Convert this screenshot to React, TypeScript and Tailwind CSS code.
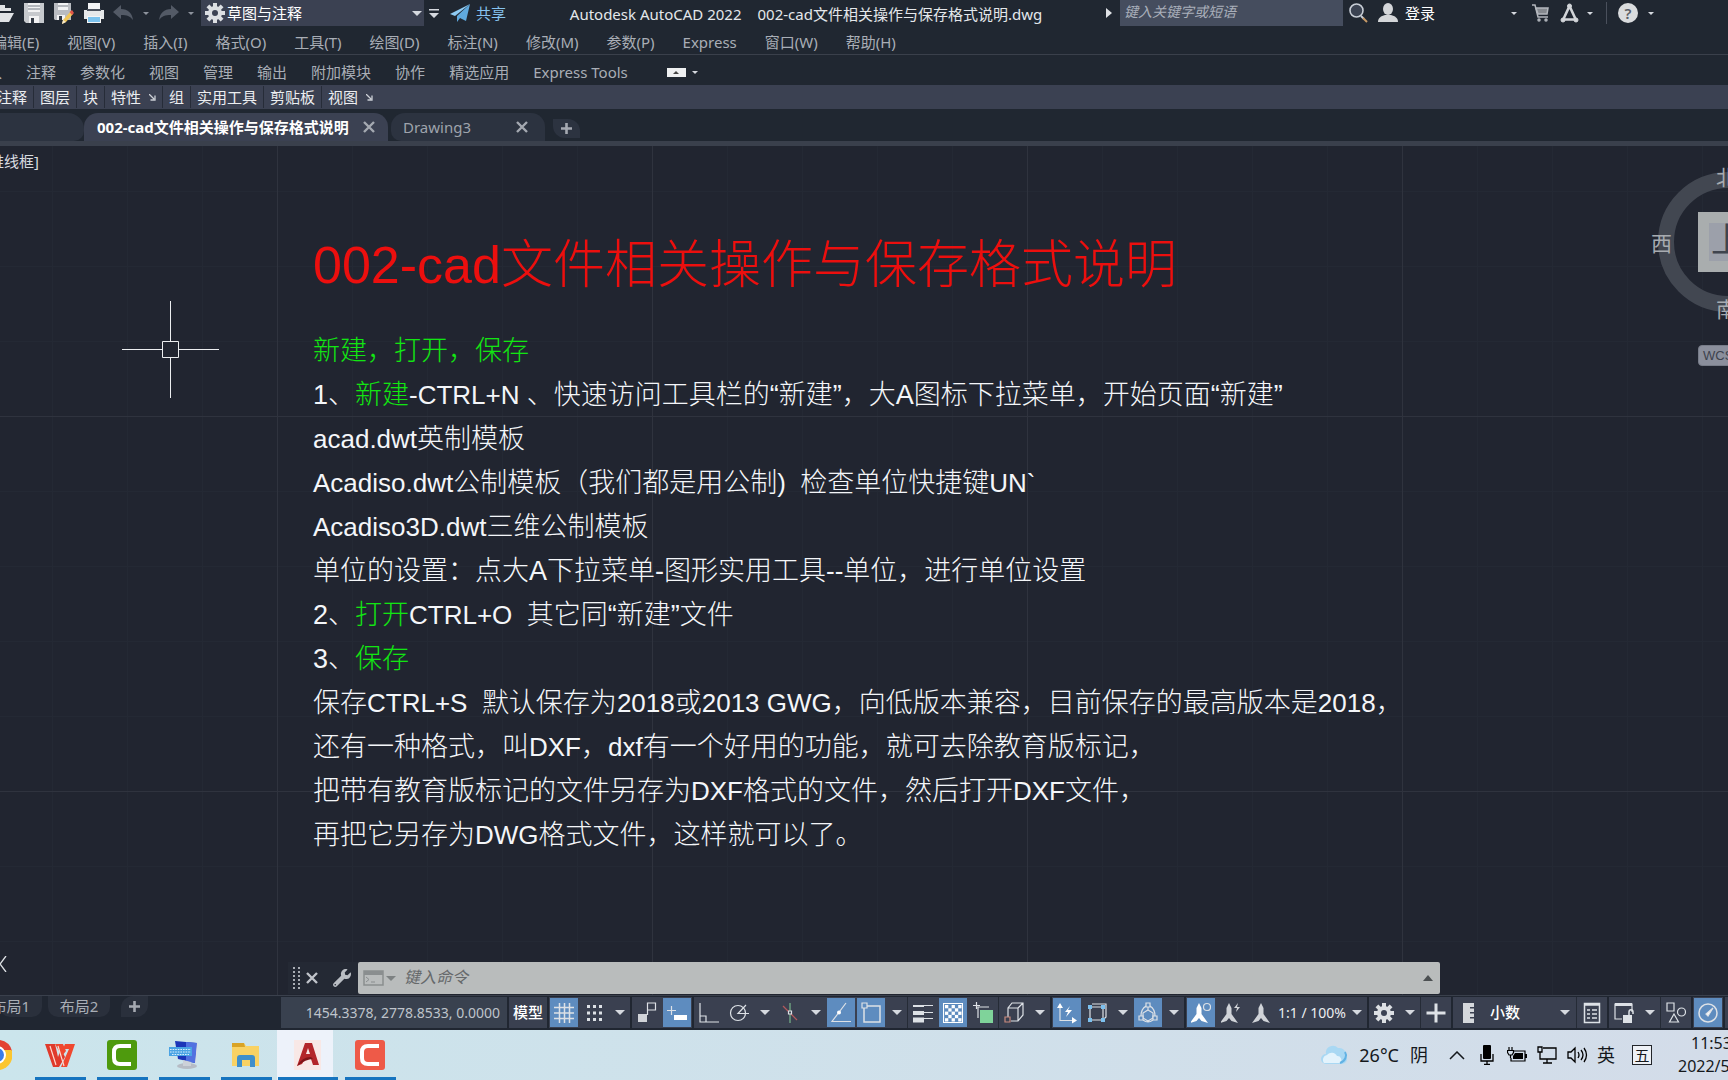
import type { ReactNode } from 'react'
import { FaWrench } from 'react-icons/fa'

const menus = ['编辑(E)', '视图(V)', '插入(I)', '格式(O)', '工具(T)', '绘图(D)', '标注(N)', '修改(M)', '参数(P)', 'Express', '窗口(W)', '帮助(H)']
const ribbonTabs = ['插入', '注释', '参数化', '视图', '管理', '输出', '附加模块', '协作', '精选应用', 'Express Tools']
const panels = [
  { name: '注释' },
  { name: '图层' },
  { name: '块' },
  { name: '特性', launcher: true },
  { name: '组' },
  { name: '实用工具' },
  { name: '剪贴板' },
  { name: '视图', launcher: true },
]

function Caret({ className = 'text-[#d5d9df]', size = 10 }: { className?: string; size?: number }) {
  return (
    <svg width={size} height={size / 2} viewBox="0 0 10 5" className={`shrink-0 ${className}`} aria-hidden="true">
      <path d="M0 0h10L5 5z" fill="currentColor" />
    </svg>
  )
}

function Gear({ size = 20, hole = '#3b4152' }: { size?: number; hole?: string }) {
  return (
    <svg width={size} height={size} viewBox="-10 -10 20 20" fill="#dcdfe3" aria-hidden="true">
      <circle r="7" />
      {[0, 45, 90, 135].map((a) => (
        <rect key={a} x="-2" y="-10" width="4" height="20" transform={`rotate(${a})`} />
      ))}
      <circle r="3" fill={hole} />
    </svg>
  )
}

function Close({ className }: { className: string }) {
  return (
    <svg width="12" height="12" viewBox="0 0 12 12" className={className} stroke="currentColor" strokeWidth="2.4" aria-hidden="true">
      <path d="M1 1l10 10M11 1L1 11" />
    </svg>
  )
}

function Plus({ size = 11 }: { size?: number }) {
  return (
    <svg width={size} height={size} viewBox="0 0 11 11" stroke="#a5a9b1" strokeWidth="2.6" aria-hidden="true">
      <path d="M5.5 0v11M0 5.5h11" />
    </svg>
  )
}

function TitleBar() {
  return (
    <header className="flex h-[28px] items-start whitespace-nowrap">
      <div className="flex h-[26px] shrink-0 items-center">
        <button aria-label="打开" className="w-[24px]">
          <svg width="15" height="22" viewBox="0 0 15 22" fill="#e0e2e5"><path d="M0 3h5v3h6v3H0zM0 11h14l-5 9H0z" /></svg>
        </button>
        <button aria-label="保存" className="w-[30px]">
          <svg width="20" height="22" viewBox="0 0 20 22">
            <path d="M0 1h20v20H2l-2-2z" fill="#c6c9cd" /><path d="M4 1h12v9H4z" fill="#f1f2f3" /><path d="M4 4h12M4 7h12" stroke="#777d85" /><path d="M5 14h10v7H5z" fill="#f1f2f3" /><path d="M7 16h3v5H7z" fill="#333a45" />
          </svg>
        </button>
        <button aria-label="另存为" className="w-[30px]">
          <svg width="20" height="22" viewBox="0 0 20 22">
            <path d="M0 1h17v17H1l-1-1z" fill="#b9bcc1" /><path d="M4 1h10v7H4z" fill="#f1f2f3" /><path d="M4 4h10" stroke="#777d85" /><path d="M3 13h8v5H3z" fill="#f1f2f3" /><path d="M5 14h3v4H5z" fill="#333a45" />
            <path d="M17 9l2 3-7 8-4 2 1-4z" fill="#f0c65a" /><path d="M18 8l2 3-2 2-2.500-3z" fill="#e0564a" /><path d="M8 22l1-4 3 2z" fill="#f7ead0" />
          </svg>
        </button>
        <button aria-label="打印" className="w-[29px]">
          <svg width="20" height="22" viewBox="0 0 20 22">
            <path d="M4 1h12v6H4z" fill="#f3f4f5" /><path d="M0 8h20v9H0z" fill="#e6e8ea" /><path d="M3 8h14" stroke="#4b525e" strokeWidth="2" /><path d="M3 14h14v7H3z" fill="#f3f4f5" /><path d="M4 15h12v5H4z" fill="#7cc3ee" />
          </svg>
        </button>
        <button aria-label="放弃" className="w-[30px]">
          <svg width="20" height="16" viewBox="0 0 20 16" fill="#535a66"><path d="M0 7l8-7v4c7 0 11 4 12 11-3-4-6-5-12-5v4z" /></svg>
        </button>
        <button aria-label="放弃列表" className="w-[16px]"><Caret size={6} className="text-[#8d939d]" /></button>
        <button aria-label="重做" className="w-[29px]">
          <svg width="20" height="16" viewBox="0 0 20 16" fill="#535a66"><path d="M20 7l-8-7v4C5 4 1 8 0 15c3-4 6-5 12-5v4z" /></svg>
        </button>
        <button aria-label="重做列表" className="w-[13px]"><Caret size={6} className="text-[#8d939d]" /></button>
        <label className="relative flex h-[26px] w-[223px] items-center bg-[#3b4152] pl-1">
          <Gear />
          <select aria-label="工作空间" className="flex-1 appearance-none bg-transparent pl-[2px] text-[15px] text-white">
            <option>草图与注释</option>
          </select>
          <span className="pointer-events-none absolute right-[2px]"><Caret /></span>
        </label>
        <button aria-label="自定义快速访问工具栏" className="ml-[5px] w-[21px]">
          <svg width="10" height="9" viewBox="0 0 10 9" fill="#d5d9df"><path d="M0 0h10v1.500H0zM0 4h10L5 9z" /></svg>
        </button>
        <button className="flex items-center gap-[6px] text-[15px] text-[#86c3ef]">
          <svg width="20" height="18" viewBox="0 0 20 18"><path d="M20 0L0 10l5 2z" fill="#8fcbf3" /><path d="M20 0L7 12v6l3-4 6 3z" fill="#5fa9de" /></svg>
          共享
        </button>
      </div>
      <h1 className="flex h-[28px] min-w-0 flex-1 items-center justify-center gap-4 overflow-hidden text-[15px] font-normal text-[#e4e7eb]">
        <span>Autodesk AutoCAD 2022</span>
        <span>002-cad文件相关操作与保存格式说明.dwg</span>
      </h1>
      <div className="flex h-[26px] shrink-0 items-center pr-[74px]">
        <svg width="14" height="12" viewBox="0 0 14 12" fill="#dfe2e6" aria-hidden="true"><path d="M0 1l6 5-6 5z" /></svg>
        <input aria-label="搜索" placeholder="键入关键字或短语" className="h-[26px] w-[223px] bg-[#454d5e] px-1 pb-[3px] text-[14px] italic placeholder:text-[#a9afba]" />
        <button aria-label="查找" className="ml-[6px] w-[29px]">
          <svg width="19" height="20" viewBox="0 0 19 20" fill="none"><circle cx="7.500" cy="7.500" r="6.500" stroke="#c8ced6" strokeWidth="1.600" fill="#3b4352" /><path d="M12 13l3 3" stroke="#c8ced6" strokeWidth="2" /><path d="M14 15l4 4" stroke="#c79a67" strokeWidth="2" /></svg>
        </button>
        <button className="flex w-[133px] items-center gap-[7px] text-[15px] text-white">
          <svg width="20" height="20" viewBox="0 0 20 20" fill="#d4d6d9"><ellipse cx="10" cy="6" rx="5" ry="6" /><path d="M0 19c0-4 3-6 7-7h6c4 1 7 3 7 7z" /></svg>
          登录
        </button>
        <button aria-label="登录选项" className="w-[21px]"><Caret size={6} /></button>
        <button aria-label="Autodesk App Store" className="w-[28px]">
          <svg width="17" height="18" viewBox="0 0 17 18" fill="none" stroke="#b3b7bd" strokeWidth="1.500"><path d="M0 1h3l3 12h10" /><path d="M4 4h12l-1 6H6z" fill="#85898f" /><circle cx="7" cy="16" r="1" /><circle cx="14" cy="16" r="1" /></svg>
        </button>
        <button aria-label="Autodesk" className="w-[27px]">
          <svg width="19" height="20" viewBox="0 0 19 20" fill="none" stroke="#d2d5d9"><path d="M9.500 3L3 17M9.500 3L16 17M3 16.500h13" strokeWidth="2.600" /><circle cx="9.500" cy="3" r="2" fill="#d2d5d9" /><circle cx="3" cy="17" r="2" fill="#d2d5d9" /><circle cx="16" cy="17" r="2" fill="#d2d5d9" /></svg>
        </button>
        <button aria-label="Autodesk 选项" className="flex h-[22px] w-[20px] items-center border-r border-[#4a505c]"><Caret size={6} /></button>
        <button aria-label="帮助" className="ml-[11px] flex h-[20px] w-[20px] items-center justify-center rounded-full bg-[#dadcde] text-[15px] font-semibold leading-none text-[#5a5f68]">?</button>
        <button aria-label="帮助选项" className="ml-[10px]"><Caret size={6} /></button>
      </div>
    </header>
  )
}

function MenuBar() {
  return (
    <nav className="overflow-hidden border-b border-[#3a404b]">
      <div className="-ml-[8px] flex h-[26px] items-center gap-[28px] whitespace-nowrap pt-[2px] text-[15px] text-[#a9aeb6]">
        {menus.map((m) => (
          <button key={m}>{m}</button>
        ))}
      </div>
    </nav>
  )
}

function RibbonTabs() {
  return (
    <nav className="overflow-hidden">
      <div className="-ml-[28px] flex h-[30px] items-center gap-6 whitespace-nowrap pt-1 text-[15px] text-[#a9aeb6]">
        {ribbonTabs.map((t) => (
          <button key={t}>{t}</button>
        ))}
        <button aria-label="最小化功能区" className="ml-[15px] flex items-center gap-[6px]">
          <span className="flex h-[9px] w-[19px] items-center justify-center bg-[#eef0f1]">
            <svg width="6" height="3" viewBox="0 0 6 3"><path d="M0 3h6L3 0z" fill="#444" /></svg>
          </span>
          <Caret size={6} />
        </button>
      </div>
    </nav>
  )
}

function PanelBar() {
  return (
    <div className="overflow-hidden bg-[#3b4152]">
      <div className="-ml-[9px] flex h-[24px] items-center whitespace-nowrap text-[15px] text-[#eceef1]">
        {panels.map((p, i) => (
          <button key={i} className="flex h-[22px] items-center gap-[8px] border-r border-[#262c38] px-[6px] last:border-0">
            {p.name}
            {p.launcher && (
              <svg width="7" height="7" viewBox="0 0 7 7" stroke="#ccd0d6" fill="none" strokeWidth="1.300"><path d="M0 0l5 5M6 1.500V6H1.500" /></svg>
            )}
          </button>
        ))}
      </div>
    </div>
  )
}

function FileTabs() {
  return (
    <div className="flex h-[37px] items-end overflow-hidden whitespace-nowrap border-b-[5px] border-[#3a404c] pt-1 text-[15px]">
      <div className="h-[28px] w-[84px] rounded-tr-[16px] rounded-br-[10px] bg-[#2c3340]" />
      <div className="flex h-[28px] w-[304px] items-center justify-between rounded-t-[14px] bg-[#3b4152] pl-[13px] pr-[13px] font-bold text-white">
        <button>002-cad文件相关操作与保存格式说明</button>
        <button aria-label="关闭 002-cad"><Close className="text-[#a4a9b1]" /></button>
      </div>
      <div className="ml-[3px] flex h-[28px] w-[154px] items-center justify-between rounded-t-[14px] rounded-bl-[10px] bg-[#2c3340] pl-3 pr-[17px] text-[#9ea3ac]">
        <button>Drawing3</button>
        <button aria-label="关闭 Drawing3"><Close className="text-[#a4a9b1]" /></button>
      </div>
      <button aria-label="新图形" className="mb-[3px] ml-2 flex h-[19px] w-[27px] items-center justify-center rounded-tr-[12px] rounded-bl-[12px] bg-[#2c3340]"><Plus /></button>
    </div>
  )
}

function Green({ children }: { children: ReactNode }) {
  return <span className="text-[#12e612]">{children}</span>
}

// Latin runs are drawn one size below the Chinese text around them
function Mix({ children }: { children: string }) {
  return children.split(/([\x20-\x7e]{2,})/).map((part, i) =>
    i % 2 ? <span key={i} className="text-[26px]">{part}</span> : part,
  )
}

function Drawing() {
  return (
    <article className="whitespace-pre pl-[313px] pt-[89px] font-['Liberation_Sans','Noto_Sans_CJK_SC',sans-serif] text-[27px] font-light leading-[44px] text-[#f4f6f9]">
      <h2 className="mb-[34px] text-[52px] leading-[60px] text-[#ec0f0e]">002-cad文件相关操作与保存格式说明</h2>
      <p><Green>新建，打开，保存</Green></p>
      <p>1、<Green>新建</Green><Mix>-CTRL+N 、快速访问工具栏的“新建”，大A图标下拉菜单，开始页面“新建”</Mix></p>
      <p><Mix>acad.dwt英制模板</Mix></p>
      <p><Mix>Acadiso.dwt公制模板（我们都是用公制)  检查单位快捷键UN`</Mix></p>
      <p><Mix>Acadiso3D.dwt三维公制模板</Mix></p>
      <p><Mix>单位的设置：点大A下拉菜单-图形实用工具--单位，进行单位设置</Mix></p>
      <p>2、<Green>打开</Green><Mix>CTRL+O  其它同“新建”文件</Mix></p>
      <p>3、<Green>保存</Green></p>
      <p><Mix>保存CTRL+S  默认保存为2018或2013 GWG，向低版本兼容，目前保存的最高版本是2018，</Mix></p>
      <p><Mix>还有一种格式，叫DXF，dxf有一个好用的功能，就可去除教育版标记，</Mix></p>
      <p><Mix>把带有教育版标记的文件另存为DXF格式的文件，然后打开DXF文件，</Mix></p>
      <p><Mix>再把它另存为DWG格式文件，这样就可以了。</Mix></p>
    </article>
  )
}

function ViewCube() {
  return (
    <div className="absolute right-0 top-[20px] h-[210px] w-[80px] overflow-hidden font-['Noto_Sans_CJK_SC',sans-serif]">
      <svg width="80" height="160" viewBox="0 0 80 160" className="absolute left-0 top-0" aria-hidden="true">
        <circle cx="80" cy="76" r="62" fill="none" stroke="#424751" strokeWidth="16" />
      </svg>
      <span className="absolute left-[3px] top-[61px] text-[21px] leading-[30px] text-[#a7abb0]">西</span>
      <span className="absolute left-[68px] top-[-5px] text-[21px] leading-[30px] text-[#a7abb0]">北</span>
      <span className="absolute left-[68px] top-[127px] text-[21px] leading-[30px] text-[#a7abb0]">南</span>
      <button className="absolute left-[50px] top-[46px] flex h-[60px] w-[60px] items-center justify-center bg-[#a9adae]">
        <span className="h-[38px] w-[38px] bg-[#9ca0aa] text-[34px] leading-[30px] text-[#3f444e]">上</span>
      </button>
      <button className="absolute left-[50px] top-[179px] h-[21px] w-[60px] rounded-[4px] border border-[#777c88] bg-[#8b8f9c] pl-1 text-left font-['Liberation_Sans',sans-serif] text-[13px] leading-none text-[#3d424d]">WCS</button>
    </div>
  )
}

function CommandLine() {
  return (
    <div className="mx-[288px] mt-auto mb-[1px] flex h-[32px]">
      <div className="flex w-[70px] items-center bg-[#242934] pl-[5px]">
        <svg width="7" height="22" viewBox="0 0 7 22" stroke="#a9adb4" strokeWidth="2" strokeDasharray="2 2" aria-hidden="true"><path d="M1 0v22M6 0v22" /></svg>
        <button aria-label="关闭命令行" className="ml-[6px]"><Close className="text-[#c0c4ca]" /></button>
        <button aria-label="自定义" className="ml-[15px]"><FaWrench size={18} color="#b9bdc3" /></button>
      </div>
      <div className="flex flex-1 items-center rounded-[2px] bg-[#b9bcbc] pl-[5px] pr-[7px]">
        <svg width="21" height="16" viewBox="0 0 21 16" fill="none" aria-hidden="true"><path d="M1 1h19v14H1z" stroke="#8a8e8f" strokeWidth="1.500" /><path d="M1 1h19v4H1z" fill="#8a8e8f" /><path d="M3 7l3 2.500L3 12M8 12h4" stroke="#8a8e8f" /></svg>
        <button aria-label="最近使用的命令" className="ml-[2px]"><Caret className="text-[#7d8182]" /></button>
        <input aria-label="命令" placeholder="键入命令" className="min-w-0 flex-1 bg-transparent pl-[8px] pb-[2px] text-[16px] italic text-[#333] placeholder:text-[#66696b]" />
        <button aria-label="命令历史"><svg width="10" height="6" viewBox="0 0 10 6"><path d="M0 6h10L5 0z" fill="#4c5052" /></svg></button>
      </div>
    </div>
  )
}

function Canvas() {
  return (
    <main className="relative flex flex-1 flex-col overflow-hidden bg-[#212530] bg-[linear-gradient(to_right,#2f333e_1px,transparent_1px),linear-gradient(to_bottom,#2f333e_1px,transparent_1px),linear-gradient(to_right,#242934_1px,transparent_1px),linear-gradient(to_bottom,#242934_1px,transparent_1px)] bg-[size:375px_375px,375px_375px,75px_75px,75px_75px] bg-[position:277px_270px,277px_270px,52px_45px,52px_45px]">
      <span className="absolute left-0 top-[4px] flex w-[39px] justify-end overflow-hidden whitespace-nowrap text-[15px] text-[#d9dce0]">[二维线框]</span>
      <svg width="98" height="98" viewBox="0 0 98 98" className="absolute left-[122px] top-[155px]" fill="none" stroke="#eceef0" aria-hidden="true">
        <path d="M0 48.500h40M57 48.500h40M48.500 0v40M48.500 57v40M40.500 40.500h16v16h-16z" />
      </svg>
      <ViewCube />
      <Drawing />
      <svg width="7" height="16" viewBox="0 0 7 16" className="absolute bottom-[23px] left-0" fill="none" stroke="#dfe2e5" strokeWidth="1.300" aria-hidden="true"><path d="M6 0L0 8l6 8" /></svg>
      <CommandLine />
    </main>
  )
}

function Tool({ label, on = false, children }: { label: string; on?: boolean; children: ReactNode }) {
  return (
    <button aria-label={label} aria-pressed={on} className={on ? 'mx-px my-px flex w-[28px] shrink-0 items-center justify-center bg-[#5e8cbf]' : 'flex w-[30px] shrink-0 items-center justify-center'}>
      <svg width="20" height="22" viewBox="0 0 20 22" fill="none" stroke="#dde1e6" strokeWidth="1.200">{children}</svg>
    </button>
  )
}

function Drop({ label }: { label: string }) {
  return (
    <button aria-label={label} className="flex w-[21px] shrink-0 items-center justify-center"><Caret /></button>
  )
}

function Group({ children }: { children: ReactNode }) {
  return <div className="flex h-[31px] shrink-0 bg-[#3a4050]">{children}</div>
}

const rule = <span className="w-px shrink-0 bg-[#252b36]" />
const arrowhead = 'M10 0l2.500 5v6l6.500 9-6.500-2-2.500-3-2.500 3L1 20l6.500-9V5z'
const checks = Array.from({ length: 25 }, (_, i) => i).filter((i) => i % 2 === 0)

function StatusBar() {
  return (
    <footer className="flex h-[35px] overflow-hidden whitespace-nowrap border-t border-[#3a404c] bg-[#202631] text-[15px]">
      <nav className="flex w-[281px] shrink-0 items-start gap-[6px] overflow-hidden text-[#a9aeb6]">
        <button className="flex h-[21px] w-[42px] items-center justify-end rounded-b-[10px] bg-[#2a303c] pr-3">布局1</button>
        <button className="flex h-[21px] w-[62px] items-center justify-center rounded-b-[10px] bg-[#2a303c]">布局2</button>
        <button aria-label="新建布局" className="ml-[5px] flex h-[21px] w-[27px] items-center justify-center rounded-tl-[12px] rounded-br-[12px] bg-[#2a303c]"><Plus /></button>
      </nav>
      <div className="flex gap-[2px] pt-[1px]">
        <button className="h-[31px] w-[226px] shrink-0 bg-[#39414f] pr-[7px] text-right text-[14px] text-[#bfc4cb]">1454.3378, 2778.8533, 0.0000</button>
        <button className="h-[31px] w-[38px] shrink-0 bg-[#3a4050] text-center font-medium text-white">模型</button>
        <Group>
          <Tool label="栅格" on><path d="M5.500 1v20M10.500 1v20M15.500 1v20M0 5.500h20M0 11h20M0 16.500h20" strokeWidth="1.500" /></Tool>
          <Tool label="捕捉模式"><path d="M3 4.500h16M3 11h16M3 17.500h16" strokeWidth="3" strokeDasharray="3 3" /></Tool>
          <Drop label="捕捉设置" />
        </Group>
        <Group>
          <Tool label="推断约束"><path d="M10.500 1h8v7h-8zM10.500 1v12" /><path d="M1 12h9v8H1z" fill="#d0d3d8" stroke="none" /></Tool>
          <Tool label="动态输入" on><path d="M4.500 4v9M0 8.500h9" /><path d="M7 13h13v5H7z" fill="#fff" stroke="none" /></Tool>
        </Group>
        <Group>
          <Tool label="正交"><path d="M1 1v19h19M1 14h6v6" /></Tool>
          <Tool label="极轴追踪"><circle cx="9" cy="11" r="7.500" /><path d="M20 11.500H9L17 3" /></Tool>
          <Drop label="极轴设置" />
          <Tool label="等轴测草图"><path d="M10 1v20" stroke="#77b58a" /><path d="M3 4l14 14" stroke="#b4585c" /><path d="M8.500 9h3v3h-3z" fill="#3a4050" /></Tool>
          <Drop label="等轴测选项" />
          <Tool label="对象捕捉追踪" on><path d="M15 1L1 19.500h19" /><circle cx="8" cy="10.500" r="2" fill="#fff" stroke="none" /></Tool>
          <Tool label="对象捕捉" on><path d="M3 5v15h16V4H6" strokeWidth="1.500" /><path d="M1 1h5v5H1z" fill="#5e8cbf" /></Tool>
          <Drop label="对象捕捉设置" />
          {rule}
          <Tool label="线宽"><path d="M0 3.500h20M0 10.500h20M0 16.500h20" /><path d="M0 4h11" strokeWidth="2" /><path d="M0 11h11" strokeWidth="4" /><path d="M0 18h11" strokeWidth="5" /></Tool>
          <Tool label="透明度" on>
            <path d="M.5 1.500h19v19H.5z" stroke="#fff" />
            {checks.map((i) => (
              <rect key={i} x={2 + (i % 5) * 3.3} y={3 + Math.floor(i / 5) * 3.3} width="3.300" height="3.300" fill="#fff" stroke="none" />
            ))}
          </Tool>
          <Tool label="选择循环"><path d="M3.500 0v7M0 3.500h7M16 5H5v11" /><path d="M7 8h13v13H7z" fill="#7fd39a" stroke="none" /></Tool>
          {rule}
          <Tool label="三维对象捕捉"><path d="M4 15V6l4-5h11v12l-5 6H7M4 6h10v13M14 6l5-5" /><path d="M1 15h5v5H1z" stroke="#c98a7e" fill="#3a4050" /></Tool>
          <Drop label="三维捕捉设置" />
        </Group>
        <Group>
          <Tool label="动态 UCS" on><path d="M3 4v14.500h14" /><path d="M0 6l3-5 3 5zM15 15l5 3.500-5 3z" fill="#fff" stroke="none" /><path d="M13 4l-5 6h3l-2 5 6-7h-4z" fill="#fff" stroke="none" /></Tool>
          <Tool label="选择过滤"><path d="M3 5h13v13H3zM5 2h14v13l-3 3" /><path d="M1 3h4v4H1zM14 3h4v4h-4zM1 16h4v4H1zM14 16h4v4h-4z" fill="#7cc0ee" stroke="none" /></Tool>
          <Drop label="过滤设置" />
          <Tool label="小控件" on><path d="M8 4Q3 7 3 14M12 4q5 3 5 10M5 18q5 4 10 0M10 5v3M10 8l5 3v5l-5 3-5-3v-5z" /><path d="M8 1h4v4H8zM1 14h4v4H1zM15 14h4v4h-4z" fill="#5e8cbf" /></Tool>
          <Drop label="小控件设置" />
        </Group>
        <Group>
          <Tool label="注释可见性" on><path d={arrowhead} transform="translate(-2 1)" fill="#fff" stroke="none" /><circle cx="16" cy="5" r="3.500" /></Tool>
          <Tool label="自动缩放"><path d={arrowhead} transform="translate(-2 1)" fill="#d0d3d8" stroke="none" /><path d="M17 1l-4 5h3l-1 4 4-5h-3z" fill="#d0d3d8" stroke="none" /></Tool>
          <Tool label="注释比例"><path d={arrowhead} transform="translate(0 1)" fill="#d0d3d8" stroke="none" /></Tool>
          <button className="w-[70px] shrink-0 text-right text-[14px] text-[#eceef1]">1:1 / 100%</button>
          <Drop label="比例列表" />
        </Group>
        <Group>
          <button aria-label="切换工作空间" className="flex w-[30px] shrink-0 items-center justify-center"><Gear /></button>
          <Drop label="工作空间列表" />
          {rule}
          <Tool label="注释监视器"><path d="M10 1.500v19M.5 11h19" strokeWidth="3" /></Tool>
        </Group>
        <Group>
          <Tool label="单位"><path d="M5 1h11v4h-4v1.500h4V10h-4v1.500h4V15h-4v1.500h4V21H5z" fill="#d5d8dc" stroke="none" /></Tool>
          <label className="relative flex w-[93px] shrink-0 items-center">
            <select aria-label="单位格式" className="w-full appearance-none bg-transparent pl-[7px] text-[15px] font-medium text-white">
              <option>小数</option>
            </select>
            <span className="pointer-events-none absolute right-[6px]"><Caret /></span>
          </label>
          {rule}
          <Tool label="快捷特性"><path d="M2.500 1.500h15v19h-15zM3 3h14M5 8h3M5 12h3M5 16h3M10 8h5M10 12h5M10 16h5" strokeWidth="1.500" /></Tool>
        </Group>
        <Group>
          <Tool label="锁定用户界面"><path d="M8 17H1V2h17v8" /><path d="M1 2.500h17" strokeWidth="3" /><path d="M9 13h9v8H9z" fill="#dde1e6" stroke="none" /><path d="M15 13v-3c0-3 4-3 4 0v2" strokeWidth="1.500" /></Tool>
          <Drop label="锁定选项" />
          {rule}
          <Tool label="隔离对象"><path d="M1 1h7v8H1zM8 12l4.500 8h-9z" /><circle cx="15.500" cy="10" r="4" /></Tool>
        </Group>
        <Group>
          <Tool label="硬件加速" on><circle cx="10" cy="11" r="9" strokeWidth="1.500" /><path d="M15 6l-7 6 2 2z" fill="#fff" /></Tool>
        </Group>
        <Group>
          <Tool label="全屏显示"><path d="M4 4h14v14H4z" /></Tool>
        </Group>
      </div>
    </footer>
  )
}

function TaskApp({ label, active = false, children }: { label: string; active?: boolean; children: ReactNode }) {
  return (
    <button aria-label={label} className={active ? 'relative flex w-[62px] shrink-0 items-center justify-center bg-linear-to-r from-[#edf2fa] from-90% to-transparent to-90%' : 'relative flex w-[62px] shrink-0 items-center justify-center'}>
      <svg width="30" height="30" viewBox="0 0 30 30">{children}</svg>
      <span className={active ? 'absolute bottom-0 h-[3px] w-[60px] bg-[#1674bf]' : 'absolute bottom-0 h-[3px] w-[51px] bg-[#1674bf]'} />
    </button>
  )
}

function TaskBar() {
  return (
    <div className="flex h-[50px] justify-between overflow-hidden whitespace-nowrap bg-linear-to-r from-[#cbe5ec] to-[#d3dce9] text-[#15181c]">
      <div className="flex">
        <button aria-label="Chrome" className="flex w-[29px] shrink-0 items-center">
          <svg width="12" height="30" viewBox="0 0 12 30"><path d="M0 0a15 15 0 0 1 12 11H0z" fill="#e34133" /><path d="M0 10h11.500A15 15 0 0 1 0 30z" fill="#fbc62f" /><circle cx="-3" cy="15" r="9" fill="#fff" /><circle cx="-3" cy="15" r="7" fill="#3a7de8" /></svg>
        </button>
        <TaskApp label="WPS">
          <path d="M0 4h10l3 13 3-8 4 8-6 10H8z" fill="#e03a2b" /><path d="M10 4h8l3 7-4 5zM16 27l8-18h-6l2-5h10l-8 23z" fill="#f0482f" /><path d="M5 6l6 19M13 6l6 20" stroke="#ffd9cf" strokeWidth="1.200" fill="none" />
        </TaskApp>
        <TaskApp label="Camtasia">
          <rect width="30" height="30" rx="3" fill="#4e9a0d" /><path d="M24 6H13q-6 0-6 6v6q0 6 6 6h11" fill="none" stroke="#fff" strokeWidth="4" />
        </TaskApp>
        <TaskApp label="屏幕键盘">
          <path d="M6 1l22 2-2 20-17-4z" fill="#1c35b8" /><path d="M17 2l11 1-2 20-9-2z" fill="#5271e0" /><path d="M28 3l1 1-2 19-1 1z" fill="#d9dde3" /><ellipse cx="18" cy="26" rx="10" ry="3" fill="#b6bcc5" /><path d="M14 20l8 2v4h-8z" fill="#ccd1d8" /><path d="M0 7h23v9H0z" fill="#4aa3e4" /><path d="M1 9.500h21M1 12h21M3 14.500h17" stroke="#d9effc" strokeWidth="1.200" strokeDasharray="1.600 1" />
        </TaskApp>
        <TaskApp label="文件资源管理器">
          <path d="M1 3h12l2 3h13v20H1z" fill="#f9d264" /><path d="M1 3h12l1 4H1z" fill="#d9a326" /><path d="M6 27V18q0-3 3-3h12q3 0 3 3v9h-5v-7h-8v7z" fill="#3f8fcb" />
        </TaskApp>
        <TaskApp label="AutoCAD 2022" active>
          <rect x="1" width="27" height="30" fill="#f8e8e6" /><path d="M4 26L12 3h7l7 22h-6l-2-6h-6l-3 5zM13 14h4l-2-6z" fill="#b3262a" /><path d="M4 26q9-7 16-7l-2-2q-9 0-14 9z" fill="#7f1519" />
        </TaskApp>
        <TaskApp label="Camtasia 录像机">
          <rect width="30" height="30" rx="3" fill="#ee5a48" /><path d="M24 6H13q-6 0-6 6v6q0 6 6 6h11" fill="none" stroke="#fff" strokeWidth="4" />
        </TaskApp>
      </div>
      <div className="flex shrink-0 items-center">
        <button className="flex items-center gap-[11px] text-[18px]">
          <svg width="27" height="22" viewBox="0 0 27 22"><path d="M5 20a5 5 0 0 1 0-10 7 7 0 0 1 12-6 7 7 0 0 1 8 8 5 5 0 0 1-4 8z" fill="#a9d8f3" /><path d="M3 19a5 5 0 0 1 3-8 6 6 0 0 1 10 1 4 4 0 0 1 3 7z" fill="#e3f3fc" /><path d="M19 19c6-2 7-8 5-11" stroke="#62b2e4" strokeWidth="2" fill="none" /></svg>
          <span>26°C</span>
          <span>阴</span>
        </button>
        <button aria-label="显示隐藏的图标" className="ml-[21px]"><svg width="16" height="9" viewBox="0 0 16 9" fill="none" stroke="#15181c" strokeWidth="1.500"><path d="M1 8l7-7 7 7" /></svg></button>
        <button aria-label="麦克风" className="ml-[15px]"><svg width="14" height="20" viewBox="0 0 14 20" fill="none" stroke="#000" strokeWidth="1.300"><rect x="3" width="8" height="14" rx="1" fill="#000" stroke="none" /><path d="M1 9v7h12V9M7 16v3M4 19.300h6" /></svg></button>
        <button aria-label="电源" className="ml-[13px]"><svg width="20" height="16" viewBox="0 0 20 16" fill="none" stroke="#000" strokeWidth="1.200"><path d="M7 4h11v10H4v-3M2 0v3M5 0v3M.5 3.500h6v2L5 8H2L.5 5.500zM3.500 8v3" /><path d="M8 6h8v6H6V9z" fill="#000" stroke="none" /><path d="M19 7v4" strokeWidth="2" /></svg></button>
        <button aria-label="网络" className="ml-[10px]"><svg width="20" height="18" viewBox="0 0 20 18" fill="none" stroke="#000" strokeWidth="1.300"><path d="M6 2h13v11H3V8M10 13v4M6 17h9M1 1h4v5H1zM3 6v3" /></svg></button>
        <button aria-label="音量" className="ml-[10px]"><svg width="21" height="18" viewBox="0 0 21 18" fill="none" stroke="#000" strokeWidth="1.300"><path d="M1 6h3l4-4v14l-4-4H1zM11 6q2 3 0 6M14 4q4 5 0 10M17 2q5 7 0 14" /></svg></button>
        <button className="ml-[9px] text-[18px]">英</button>
        <button className="ml-[17px] flex h-[20px] w-[20px] items-center justify-center border border-[#22252a] bg-[#eef1f6] text-[15px] leading-none">五</button>
        <button className="ml-[26px] w-[50px] overflow-hidden text-left text-[16px] leading-[23px]">
          <span className="block pl-[13px]">11:53</span>
          <span className="block">2022/5</span>
        </button>
      </div>
    </div>
  )
}

export default function App() {
  return (
    <div className="flex min-h-screen flex-col overflow-hidden bg-[#202731] font-['Noto_Sans','Noto_Sans_CJK_SC',sans-serif]">
      <TitleBar />
      <MenuBar />
      <RibbonTabs />
      <PanelBar />
      <FileTabs />
      <Canvas />
      <StatusBar />
      <TaskBar />
    </div>
  )
}
